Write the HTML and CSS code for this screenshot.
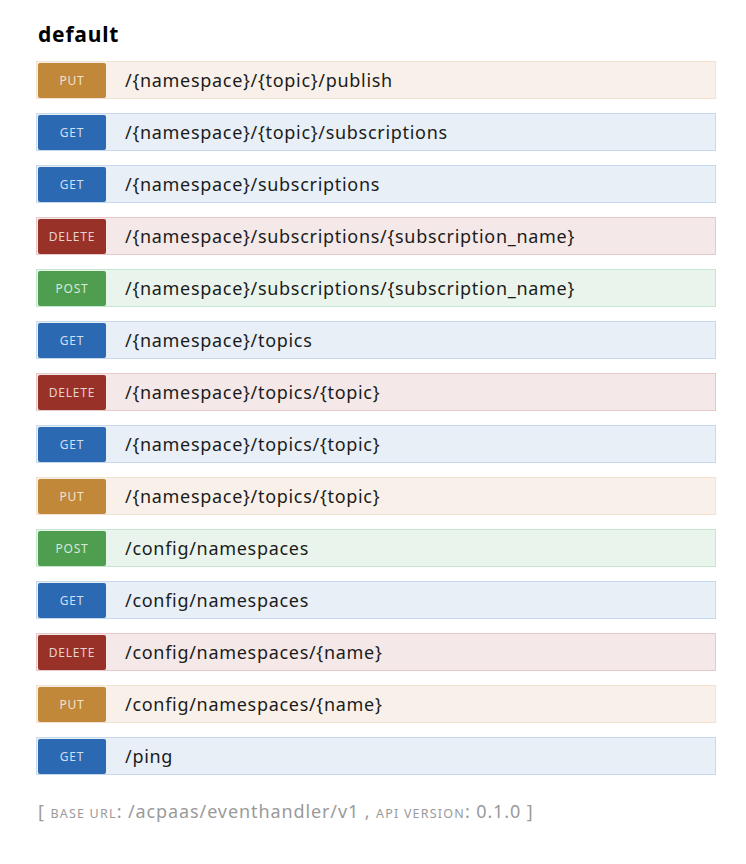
FILE: index.html
```html
<!DOCTYPE html>
<html>
<head>
<meta charset="utf-8">
<link rel="stylesheet" href="styles.css">
</head>
<body>
<div class="page">
  <h2 class="title">default</h2>
  <ul class="ops">
    <li class="op put"><span class="method">PUT</span><span class="path">/{namespace}/{topic}/publish</span></li>
    <li class="op get"><span class="method">GET</span><span class="path">/{namespace}/{topic}/subscriptions</span></li>
    <li class="op get"><span class="method">GET</span><span class="path">/{namespace}/subscriptions</span></li>
    <li class="op delete"><span class="method">DELETE</span><span class="path">/{namespace}/subscriptions/{subscription_name}</span></li>
    <li class="op post"><span class="method">POST</span><span class="path">/{namespace}/subscriptions/{subscription_name}</span></li>
    <li class="op get"><span class="method">GET</span><span class="path">/{namespace}/topics</span></li>
    <li class="op delete"><span class="method">DELETE</span><span class="path">/{namespace}/topics/{topic}</span></li>
    <li class="op get"><span class="method">GET</span><span class="path">/{namespace}/topics/{topic}</span></li>
    <li class="op put"><span class="method">PUT</span><span class="path">/{namespace}/topics/{topic}</span></li>
    <li class="op post"><span class="method">POST</span><span class="path">/config/namespaces</span></li>
    <li class="op get"><span class="method">GET</span><span class="path">/config/namespaces</span></li>
    <li class="op delete"><span class="method">DELETE</span><span class="path">/config/namespaces/{name}</span></li>
    <li class="op put"><span class="method">PUT</span><span class="path">/config/namespaces/{name}</span></li>
    <li class="op get"><span class="method">GET</span><span class="path">/ping</span></li>
  </ul>
  <p class="footer">[ <span class="sc">base url</span>: /acpaas/eventhandler/v1 , <span class="sc">api version</span>: 0.1.0 ]</p>
</div>
</body>
</html>
```
FILE: styles.css
```css
html, body {
  margin: 0;
  padding: 0;
  background: #ffffff;
}
body {
  font-family: "Noto Sans", "Open Sans", sans-serif;
  color: #1a1a1a;
}
.page {
  width: 680px;
  padding: 20px 0 0 36px;
}
.title {
  margin: 0 0 0 2px;
  font-size: 21px;
  font-weight: 700;
  line-height: 28px;
  letter-spacing: 0.8px;
  color: #000;
}
.ops {
  list-style: none;
  margin: 13px 0 0 0;
  padding: 0;
  display: flex;
  flex-direction: column;
  gap: 14px;
}
.op {
  display: flex;
  align-items: center;
  height: 36px;
  border: 1px solid;
  padding: 0;
}
.method {
  width: 68px;
  height: 35px;
  margin-left: 1px;
  display: flex;
  align-items: center;
  justify-content: center;
  border-radius: 2px;
  font-size: 12px;
  letter-spacing: 0.8px;
  color: rgba(255, 255, 255, 0.78);
}
.path {
  margin-left: 19px;
  font-size: 18px;
  letter-spacing: 0.7px;
  color: #1b1b1b;
}
.put { background: #f9f1e9; border-color: #f1e2cf; }
.put .method { background: #c1883a; }
.get { background: #e8eff7; border-color: #c8d9ee; }
.get .method { background: #2b69b2; }
.delete { background: #f4e8e8; border-color: #e8c8c8; }
.delete .method { background: #983229; }
.post { background: #e9f5ec; border-color: #c6e6cf; }
.post .method { background: #4f9e50; }
.footer {
  margin: 24px 0 0 2px;
  font-size: 18px;
  letter-spacing: 0.9px;
  color: #9a9a9a;
}
.sc {
  font-size: 12.5px;
  text-transform: uppercase;
  letter-spacing: 1.2px;
}
```
